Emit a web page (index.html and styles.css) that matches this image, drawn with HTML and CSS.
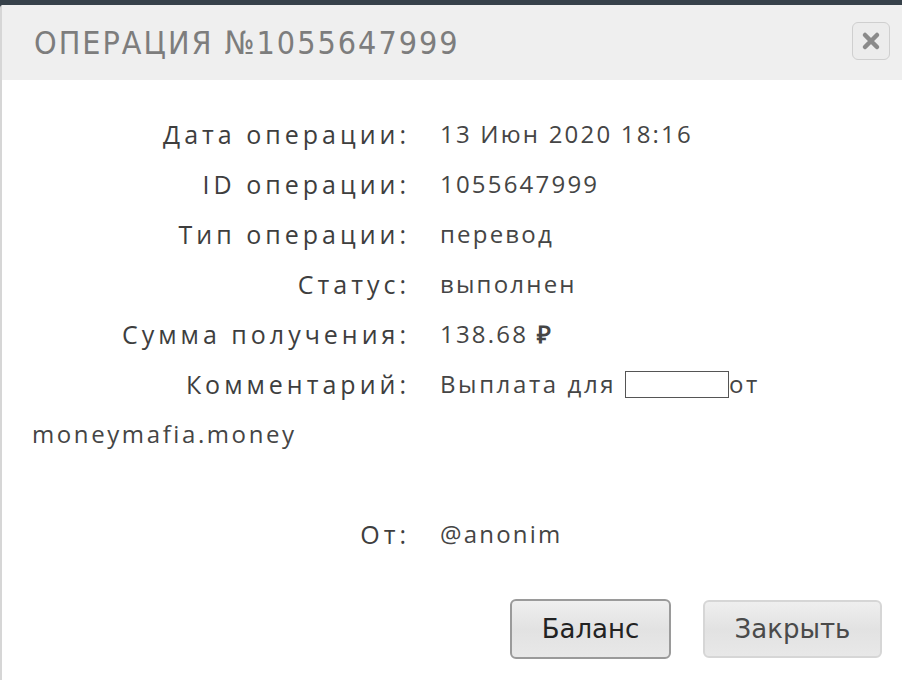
FILE: index.html
```html
<!DOCTYPE html>
<html lang="ru">
<head>
<meta charset="utf-8">
<title>Операция</title>
<link rel="stylesheet" href="styles.css">
</head>
<body>
<div class="topbar"></div>
<div class="dialog">
  <div class="dialog-header">
    <h1 class="dialog-title">ОПЕРАЦИЯ №1055647999</h1>
    <button class="close-btn" aria-label="Закрыть">
      <svg width="20" height="20" viewBox="0 0 20 20"><path d="M4 4 L16 16 M16 4 L4 16" stroke="#8a8a8a" stroke-width="4.5" stroke-linecap="round"/></svg>
    </button>
  </div>
  <div class="dialog-body">
    <div class="row"><span class="label">Дата операции:</span><span class="value">13 Июн 2020 18:16</span></div>
    <div class="row"><span class="label">ID операции:</span><span class="value">1055647999</span></div>
    <div class="row"><span class="label">Тип операции:</span><span class="value">перевод</span></div>
    <div class="row"><span class="label">Статус:</span><span class="value">выполнен</span></div>
    <div class="row"><span class="label">Сумма получения:</span><span class="value">138.68 <b class="rub">₽</b></span></div>
    <div class="row"><span class="label">Комментарий:</span><span class="value comment">Выплата для <span class="blank"></span>от</span><br><span class="value comment">moneymafia.money</span></div>
    <div class="row spacer"></div>
    <div class="row"><span class="label">От:</span><span class="value">@anonim</span></div>
  </div>
  <div class="dialog-footer">
    <button class="btn btn-primary">Баланс</button>
    <button class="btn btn-secondary">Закрыть</button>
  </div>
</div>
</body>
</html>
```
FILE: styles.css
```css
html, body {
  margin: 0;
  padding: 0;
  height: 100%;
}
body {
  background: #37414a;
  overflow: hidden;
}
.topbar {
  height: 5px;
}
.dialog {
  background: #fff;
  border-left: 2px solid #d6d6d6;
  border-top-left-radius: 3px;
  height: 675px;
  box-sizing: border-box;
}
.dialog-header {
  height: 75px;
  background: #efefef;
  display: flex;
  align-items: center;
  justify-content: space-between;
  padding: 0 12px 0 32px;
}
.dialog-title {
  margin: 0;
  font-family: "DejaVu Sans Condensed", "DejaVu Sans", sans-serif;
  font-weight: normal;
  font-size: 32px;
  letter-spacing: 2px;
  color: #7d7d7d;
}
.close-btn {
  width: 38px;
  height: 38px;
  border: 1px solid #cfcfcf;
  border-radius: 6px;
  background: #ececec;
  display: flex;
  align-items: center;
  justify-content: center;
  padding: 0;
  margin-top: -4px;
}
.dialog-body {
  padding: 29px 20px 0 30px;
  font-family: "Open Sans", sans-serif;
  font-size: 24px;
  color: #454545;
  line-height: 50px;
}
.row {
  min-height: 50px;
}
.label {
  display: inline-block;
  vertical-align: top;
  width: 378px;
  height: 50px;
  text-align: right;
  margin-right: 30px;
  font-size: 25px;
  letter-spacing: 4px;
  color: #3e3e3e;
}
.value {
  letter-spacing: 2.2px;
}
.comment {
  letter-spacing: 2.6px;
}
.rub {
  font-weight: bold;
}
.blank {
  display: inline-block;
  width: 102px;
  height: 25px;
  border: 1px solid #555;
  vertical-align: -5px;
}
.dialog-footer {
  display: flex;
  justify-content: flex-end;
  gap: 32px;
  padding: 40px 20px 0 0;
}
.btn {
  font-family: "DejaVu Sans", sans-serif;
  font-size: 26px;
  border-radius: 6px;
  background: linear-gradient(#efefef, #e2e2e2 50%, #e8e8e8);
  padding: 0;
}
.btn-primary {
  width: 161px;
  height: 60px;
  border: 2px solid #9a9a9a;
  color: #222;
}
.btn-secondary {
  width: 179px;
  height: 58px;
  margin-top: 1px;
  border: 2px solid #d6d6d6;
  color: #4a4a4a;
}
```
